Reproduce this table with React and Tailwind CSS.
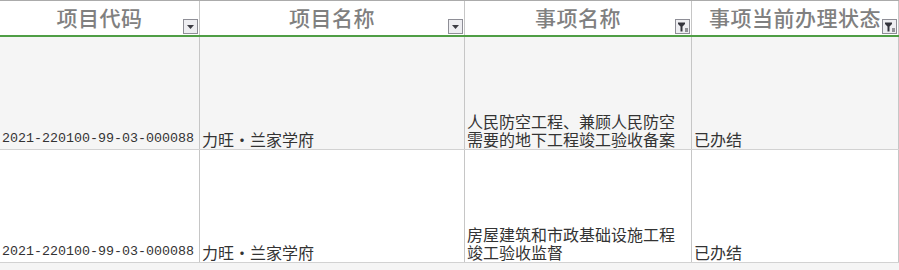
import React from 'react';

const cjk = { fontFamily: '"Noto Sans CJK SC", "Noto Sans", sans-serif' };
const mono = { fontFamily: '"Liberation Mono", "Noto Sans CJK SC", monospace' };

const DropBtn = () => (
  <svg width="15" height="15" viewBox="0 0 15 15" className="absolute right-[1px] bottom-[1px]">
    <rect x="0.5" y="0.5" width="14" height="14" fill="#eeeef2" stroke="#8e8e96" />
    <path d="M4 6h7l-3.5 4z" fill="#3c3c44" />
  </svg>
);

const FilterBtn = () => (
  <svg width="15" height="15" viewBox="0 0 15 15" className="absolute right-[1px] bottom-[1px]">
    <rect x="0.5" y="0.5" width="14" height="14" fill="#eeeef2" stroke="#8e8e96" />
    <path d="M3 3.5h7v1.5l-2.5 2.5v5h-2v-5l-2.5-2.5z" fill="#34343c" />
    <path d="M10 10h3M10 12h3" stroke="#34343c" strokeWidth="1" />
  </svg>
);

const headers = [
  { label: '项目代码', btn: 'drop' },
  { label: '项目名称', btn: 'drop' },
  { label: '事项名称', btn: 'filter' },
  { label: '事项当前办理状态', btn: 'filter' },
];

const rows = [
  { code: '2021-220100-99-03-000088', name: '力旺・兰家学府', item: ['人民防空工程、兼顾人民防空', '需要的地下工程竣工验收备案'], status: '已办结', bg: 'bg-[#f5f5f5]' },
  { code: '2021-220100-99-03-000088', name: '力旺・兰家学府', item: ['房屋建筑和市政基础设施工程', '竣工验收监督'], status: '已办结', bg: 'bg-white' },
];

export default function App() {
  return (
    <div className="w-[899px] h-[270px] overflow-hidden bg-[#f5f5f5] border-t border-[#ababab]">
      <div className="grid grid-cols-[200px_265px_227px_207px] h-[36px] bg-white border-b-2 border-[#4f9e45]">
        {headers.map((h, i) => (
          <div key={i} className="relative flex items-center justify-center border-r border-[#c6c6c6] pb-[1px]">
            <span className="text-[21px] font-medium text-[#808080] tracking-[0.5px] leading-none" style={cjk}>{h.label}</span>
            {h.btn === 'drop' ? <DropBtn /> : <FilterBtn />}
          </div>
        ))}
      </div>
      {rows.map((r, i) => (
        <div key={i} className={`grid grid-cols-[200px_265px_227px_207px] h-[113px] border-b border-[#d2d2d2] ${r.bg} text-[#333333]`}>
          <div className="flex items-end border-r border-[#c6c6c6] pl-[2px] pb-[1px]">
            <span className="text-[13.33px] leading-[18px]" style={mono}>{r.code}</span>
          </div>
          <div className="flex items-end border-r border-[#c6c6c6] pl-[2px] pb-[1px]">
            <span className="text-[16px] leading-[18px]" style={cjk}>{r.name}</span>
          </div>
          <div className="flex items-end border-r border-[#c6c6c6] pl-[2px] pb-[1px]">
            <span className="text-[16px] leading-[18px] whitespace-nowrap" style={cjk}>
              {r.item[0]}<br />{r.item[1]}
            </span>
          </div>
          <div className="flex items-end border-r border-[#c6c6c6] pl-[2px] pb-[1px]">
            <span className="text-[16px] leading-[18px]" style={cjk}>{r.status}</span>
          </div>
        </div>
      ))}
    </div>
  );
}
